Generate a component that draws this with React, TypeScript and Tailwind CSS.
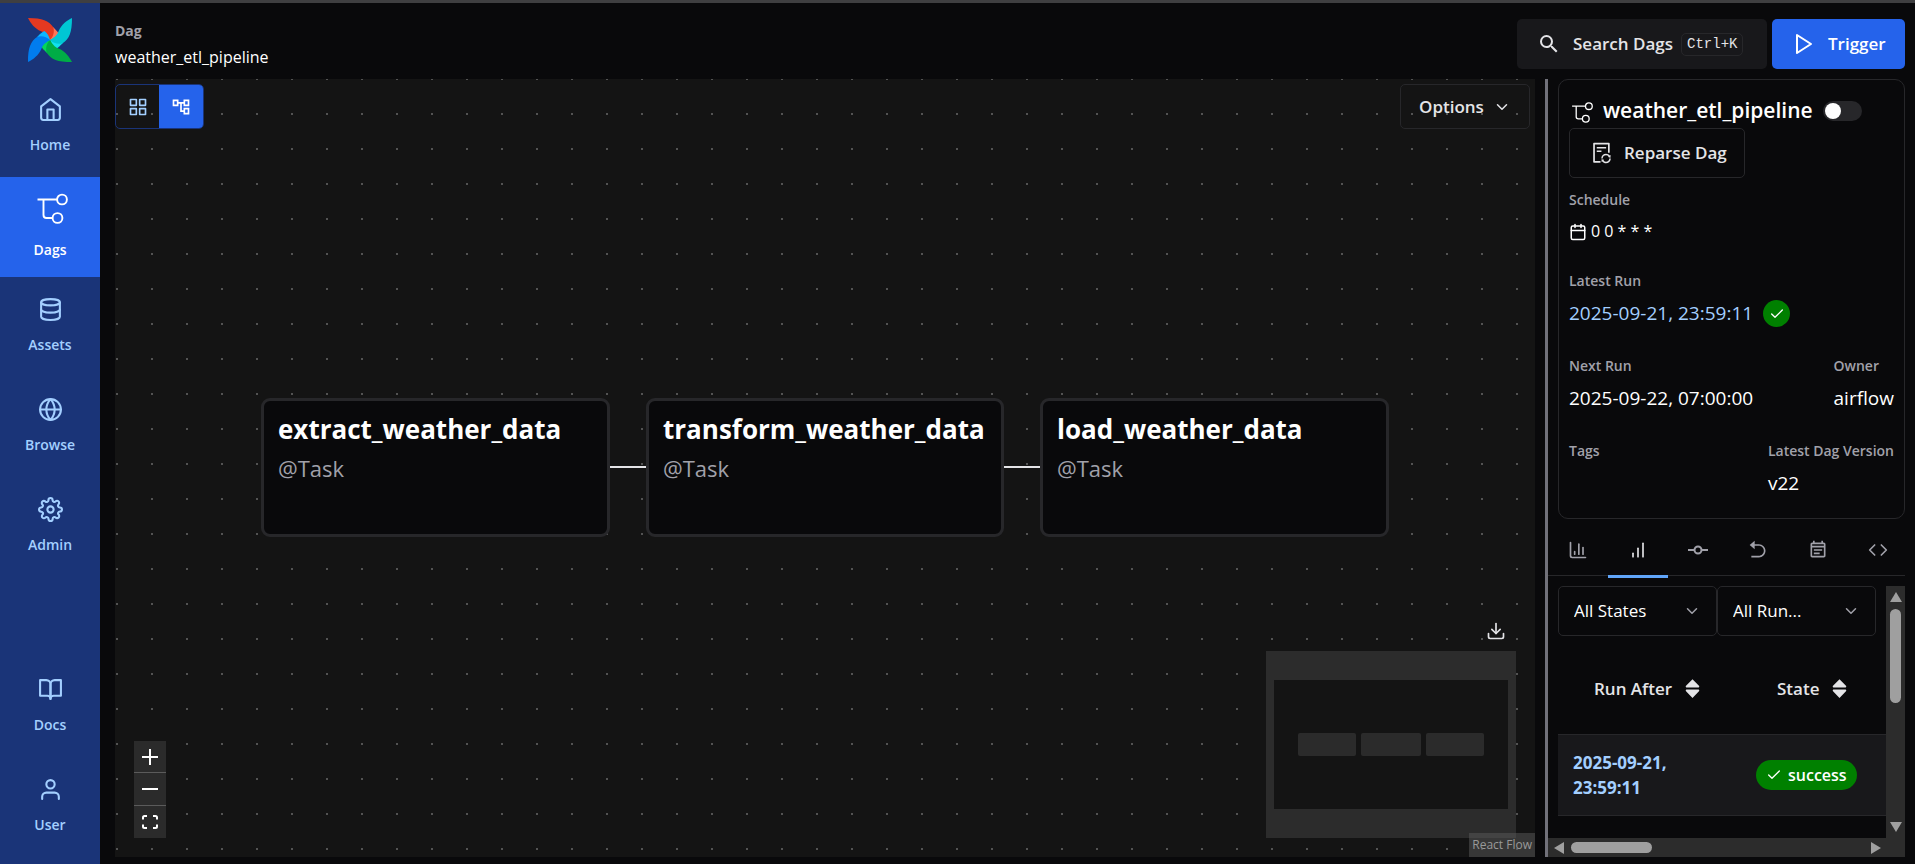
import type { ReactNode } from "react";
import {
  FiBarChart,
  FiBookOpen,
  FiCalendar,
  FiCheck,
  FiChevronDown,
  FiCode,
  FiDatabase,
  FiDownload,
  FiGlobe,
  FiGrid,
  FiHome,
  FiPlay,
  FiSettings,
  FiUser,
} from "react-icons/fi";
import { MdOutlineAccountTree, MdOutlineEventNote, MdSearch } from "react-icons/md";
import { AiOutlineFileSync } from "react-icons/ai";
import { RiArrowGoBackFill } from "react-icons/ri";
import { TiArrowUnsorted } from "react-icons/ti";
import { LuChartColumn } from "react-icons/lu";

function PinwheelLogo() {
  return (
    <svg viewBox="0 0 132 132" className="size-11" role="img" aria-label="Airflow">
      {[
        { turn: "rotate(0 66 66)", dark: "#e43921", light: "#ff7557" },
        { turn: "rotate(90 66 66)", dark: "#00c7d4", light: "#11e1ee" },
        { turn: "rotate(180 66 66)", dark: "#00ad46", light: "#04d659" },
        { turn: "rotate(270 66 66)", dark: "#017cee", light: "#0cb6ff" },
      ].map((blade) => (
        <g key={blade.turn} transform={blade.turn}>
          <path d="M76 28 C84 36 90 42 93 49 C86 58 78 63 66 66 C60 56 66 36 76 28Z" fill={blade.light} />
          <path d="M0 0 C44 0 62 8 76 28 C80 42 76 56 66 66 C56 48 48 43 39 40 C20 32 8 16 0 0Z" fill={blade.dark} />
        </g>
      ))}
    </svg>
  );
}

function DagIcon({ className }: { className: string }) {
  return (
    <svg viewBox="0 0 35 35" className={className} fill="none" stroke="currentColor" strokeWidth="1.9" aria-hidden="true">
      <circle cx="29" cy="7.5" r="4.9" />
      <circle cx="24.5" cy="26" r="4.9" />
      <path d="M4.5 7.5H24M10.5 7.5V23q0 3 3 3H19.5" />
    </svg>
  );
}

function TaskIcon({ className }: { className: string }) {
  return (
    <svg viewBox="0 0 20 20" className={className} fill="none" stroke="currentColor" strokeWidth="2" aria-hidden="true">
      <circle cx="10" cy="10" r="3.5" />
      <path d="M0 10H6.5M13.5 10H20" />
    </svg>
  );
}

function NavItem({ label, icon, active = false }: { label: string; icon: ReactNode; active?: boolean }) {
  return (
    <a
      href="#"
      aria-current={active ? "page" : undefined}
      className={
        active
          ? "flex h-[100px] flex-col items-center justify-center gap-3 bg-[#2563eb] pb-0.5 text-[14px] leading-[22px] font-semibold text-white"
          : "flex h-[100px] flex-col items-center justify-center gap-3 pb-0.5 text-[14px] leading-[22px] font-semibold text-[#a3cfff]"
      }
    >
      {icon}
      {label}
    </a>
  );
}

function Sidebar() {
  return (
    <nav aria-label="Main" className="flex w-[100px] shrink-0 flex-col justify-between bg-[#1a3478] pb-[7px]">
      <div>
        <a href="#" className="flex h-[74px] justify-center pt-[15px]">
          <PinwheelLogo />
        </a>
        <NavItem label="Home" icon={<FiHome className="size-[25px]" />} />
        <NavItem label="Dags" active icon={<DagIcon className="size-[35px]" />} />
        <NavItem label="Assets" icon={<FiDatabase className="size-[25px]" />} />
        <NavItem label="Browse" icon={<FiGlobe className="size-[25px]" />} />
        <NavItem label="Admin" icon={<FiSettings className="size-[25px]" />} />
      </div>
      <div>
        <NavItem label="Docs" icon={<FiBookOpen className="size-[25px]" />} />
        <NavItem label="User" icon={<FiUser className="size-[25px]" />} />
      </div>
    </nav>
  );
}

function Header() {
  return (
    <header className="flex h-[76px] shrink-0 items-start justify-between pt-4 pr-2.5 pl-[15px]">
      <div className="pt-0.5">
        <div className="text-[14px] leading-5 font-bold text-[#a1a1aa]">Dag</div>
        <a href="#" className="block pt-1 text-[16px] leading-6 text-white">
          weather_etl_pipeline
        </a>
      </div>
      <div className="flex gap-[5px]">
        <button className="flex h-[50px] w-[250px] items-center rounded-[5px] bg-[#18181b] pl-5 text-[17px] font-semibold text-[#e4e4e7]">
          <MdSearch className="mr-3 size-6" />
          Search Dags
          <kbd className="ml-2 rounded-[5px] border border-[#27272a] px-[5px] font-[Liberation_Mono,monospace] text-[14px] leading-[21px] font-normal">
            Ctrl+K
          </kbd>
        </button>
        <button className="flex h-[50px] w-[133px] items-center rounded-[5px] bg-[#2563eb] pl-5 text-[17px] font-semibold text-white">
          <FiPlay className="mr-3 size-6" />
          Trigger
        </button>
      </div>
    </header>
  );
}

function TaskNode({ name, width }: { name: string; width: string }) {
  return (
    <div className={`${width} h-[139px] rounded-[9px] border-[3px] border-[#27272a] bg-[#09090b] px-3.5 pt-[9px]`}>
      <div className="text-[26px] leading-[38px] font-bold text-white">{name}</div>
      <div className="pt-0.5 text-[22px] leading-9 text-[#a1a1aa]">@Task</div>
    </div>
  );
}

function GraphCanvas() {
  return (
    <main className="relative min-w-0 flex-1 overflow-hidden bg-[#141414]">
      <svg className="absolute inset-0 size-full" aria-hidden="true">
        <defs>
          <pattern id="dots" x="1" y="-1" width="35" height="35" patternUnits="userSpaceOnUse">
            <circle cx="1" cy="1" r="1" fill="#686868" />
          </pattern>
        </defs>
        <rect width="100%" height="100%" fill="url(#dots)" />
      </svg>

      <div className="relative flex h-full items-center justify-center pb-0.5">
        <TaskNode name="extract_weather_data" width="w-[349px]" />
        <div className="h-0.5 w-9 bg-[#e4e4e7]" />
        <TaskNode name="transform_weather_data" width="w-[358px]" />
        <div className="h-0.5 w-9 bg-[#e4e4e7]" />
        <TaskNode name="load_weather_data" width="w-[349px]" />
      </div>

      <div className="absolute top-[5px] left-0 flex h-[45px] overflow-hidden rounded-[5px] border border-[#1a3478]">
        <button aria-label="Grid view" className="flex w-[43px] items-center justify-center text-[#a3cfff]">
          <FiGrid className="size-5" />
        </button>
        <button aria-label="Graph view" aria-pressed="true" className="flex w-11 items-center justify-center bg-[#2563eb] text-white">
          <MdOutlineAccountTree className="size-5" />
        </button>
      </div>

      <button className="absolute top-[5px] right-[5px] flex h-[45px] w-[130px] items-center justify-between rounded-[5px] border border-[#27272a] px-[18px] text-[17px] font-semibold text-[#e4e4e7]">
        Options
        <FiChevronDown className="size-[18px]" />
      </button>

      <div className="absolute bottom-[19px] left-[19px] flex w-8 flex-col divide-y divide-[#5b5b5b] bg-[#2b2b2b] text-white">
        <button aria-label="Zoom in" className="flex h-8 items-center justify-center">
          <svg viewBox="0 0 16 16" className="size-4" stroke="currentColor" strokeWidth="2" aria-hidden="true">
            <path d="M8 0V16M0 8H16" />
          </svg>
        </button>
        <button aria-label="Zoom out" className="flex h-[33px] items-center justify-center">
          <svg viewBox="0 0 16 16" className="size-4" stroke="currentColor" strokeWidth="2" aria-hidden="true">
            <path d="M0 8H16" />
          </svg>
        </button>
        <button aria-label="Fit view" className="flex h-8 items-center justify-center">
          <svg viewBox="0 0 16 16" className="size-4" fill="none" stroke="currentColor" strokeWidth="2" aria-hidden="true">
            <path d="M1 5.5V3.5Q1 2 2.5 2H5M11 2H13.5Q15 2 15 3.5V5.5M15 10.5V12.5Q15 14 13.5 14H11M5 14H2.5Q1 14 1 12.5V10.5" />
          </svg>
        </button>
      </div>

      <button aria-label="Download graph" className="absolute right-[29px] bottom-[216px] text-[#e4e4e7]">
        <FiDownload className="size-5" />
      </button>

      <div className="absolute right-[19px] bottom-[19px] flex h-[187px] w-[250px] items-center justify-center bg-[#2c2c2c]">
        <div className="flex h-[129px] w-[234px] items-center justify-center gap-[5px] bg-[#141414]">
          <div className="h-[23px] w-[58px] rounded-[2px] bg-[#2b2b2b]" />
          <div className="h-[23px] w-[60px] rounded-[2px] bg-[#2b2b2b]" />
          <div className="h-[23px] w-[58px] rounded-[2px] bg-[#2b2b2b]" />
        </div>
      </div>
      <a href="#" className="absolute right-0 bottom-0 bg-[#5a5a5a]/50 px-[3px] text-[12px] leading-6 text-[#999999]">
        React Flow
      </a>
    </main>
  );
}

function Stat({ label, children }: { label: string; children?: ReactNode }) {
  return (
    <div>
      <dt className="text-[14px] leading-5 font-semibold text-[#a1a1aa]">{label}</dt>
      <dd className="flex h-[45px] items-center text-[19px] text-white">{children}</dd>
    </div>
  );
}

function DetailsCard() {
  return (
    <section className="ml-2.5 h-[440px] rounded-[10px] border border-[#27272a] px-2.5 pt-[13px]">
      <div className="flex items-center">
        <DagIcon className="mt-1 size-6" />
        <h1 className="ml-2.5 text-[21px] leading-[35px] font-semibold text-white">weather_etl_pipeline</h1>
        <label className="ml-2.5 flex h-5 w-[39px] items-center rounded-full bg-[#27272a] px-0.5">
          <input type="checkbox" role="switch" aria-label="Pause or unpause" className="size-4 appearance-none rounded-full bg-white" />
        </label>
      </div>
      <button className="flex h-[50px] w-44 items-center rounded-[5px] border border-[#27272a] pl-5 text-[17px] font-semibold text-[#e4e4e7]">
        <AiOutlineFileSync className="mr-2.5 size-6" />
        Reparse Dag
      </button>
      <dl className="flex flex-col gap-5 pt-3">
        <div className="-mb-1">
          <Stat label="Schedule">
            <span className="flex gap-1 pb-1 text-[16px]">
              <FiCalendar className="mt-1 size-[18px]" />
              0 0 * * *
            </span>
          </Stat>
        </div>
        <Stat label="Latest Run">
          <a href="#" className="text-[#a3cfff]">
            2025-09-21, 23:59:11
          </a>
          <span className="ml-2.5 flex size-[27px] items-center justify-center rounded-full bg-[#008000]">
            <FiCheck className="size-4" />
          </span>
        </Stat>
        <div className="flex justify-between">
          <Stat label="Next Run">2025-09-22, 07:00:00</Stat>
          <Stat label="Owner">airflow</Stat>
        </div>
        <div className="flex justify-between">
          <Stat label="Tags" />
          <Stat label="Latest Dag Version">v22</Stat>
        </div>
      </dl>
    </section>
  );
}

function Tabs() {
  const icons = [
    { name: "Overview", icon: <LuChartColumn className="size-5" /> },
    { name: "Runs", icon: <FiBarChart className="size-5" /> },
    { name: "Tasks", icon: <TaskIcon className="size-5" /> },
    { name: "Backfills", icon: <RiArrowGoBackFill className="size-5" /> },
    { name: "Events", icon: <MdOutlineEventNote className="size-5" /> },
    { name: "Code", icon: <FiCode className="size-5" /> },
  ];
  return (
    <div role="tablist" className="mt-1.5 flex h-[51px] shrink-0 items-start border-b border-[#27272a]">
      {icons.map((tab) => (
        <button
          key={tab.name}
          role="tab"
          aria-label={tab.name}
          aria-selected={tab.name === "Runs"}
          className={
            tab.name === "Runs"
              ? "flex h-[53px] w-15 shrink-0 items-center justify-center border-b-[3px] border-[#60a5fa] text-[#e4e4e7]"
              : "flex h-[53px] w-15 shrink-0 items-center justify-center border-b-[3px] border-transparent text-[#a1a1aa]"
          }
        >
          {tab.icon}
        </button>
      ))}
    </div>
  );
}

function FilterSelect({ label, value }: { label: string; value: string }) {
  return (
    <div className="grid flex-1 items-center">
      <select
        aria-label={label}
        className="col-start-1 row-start-1 h-[50px] w-full appearance-none rounded-[5px] border border-[#27272a] bg-transparent pl-[15px] text-[17px] text-white"
      >
        <option>{value}</option>
      </select>
      <FiChevronDown className="pointer-events-none col-start-1 row-start-1 mr-4 size-[18px] justify-self-end text-[#a1a1aa]" />
    </div>
  );
}

function SortHeader({ label, width }: { label: string; width: string }) {
  return (
    <th className={`${width} p-0 pt-2 text-left`}>
      <button className="flex items-center gap-2 pl-9 text-[17px] font-semibold text-[#e4e4e7]">
        {label}
        <TiArrowUnsorted className="size-[25px]" />
      </button>
    </th>
  );
}

function RunsPanel() {
  return (
    <div className="mt-2.5 flex min-h-0 flex-1 flex-col">
      <div className="flex min-h-0 flex-1">
        <div className="ml-2.5 min-w-0 flex-1 overflow-hidden">
          <div className="flex pr-2.5">
            <FilterSelect label="State" value="All States" />
            <FilterSelect label="Run type" value="All Run..." />
          </div>
          <table className="w-full table-fixed border-collapse">
            <thead>
              <tr className="h-[98px]">
                <SortHeader label="Run After" width="w-[183px]" />
                <SortHeader label="State" width="w-auto" />
              </tr>
            </thead>
            <tbody>
              <tr className="h-[81px] border-y border-[#27272a] bg-[#18181b]">
                <td className="pl-[15px] text-[17px] leading-[25px] font-bold">
                  <a href="#" className="block w-[120px] text-[#a3cfff]">
                    2025-09-21, 23:59:11
                  </a>
                </td>
                <td className="pl-[15px]">
                  <span className="inline-flex h-[30px] items-center gap-1.5 rounded-full bg-[#008000] px-2.5 text-[16px] font-semibold text-white">
                    <FiCheck className="size-4" />
                    success
                  </span>
                </td>
              </tr>
            </tbody>
          </table>
        </div>
        <div className="flex w-[19px] flex-col items-center bg-[#2c2c2c] py-1.5 text-[#9f9f9f]" aria-hidden="true">
          <svg viewBox="0 0 12 10" className="h-2.5 w-3" fill="currentColor">
            <path d="M6 0L12 10H0Z" />
          </svg>
          <div className="mt-[7px] h-[94px] w-[11px] rounded-full bg-[#9f9f9f]" />
          <svg viewBox="0 0 12 10" className="mt-auto h-2.5 w-3" fill="currentColor">
            <path d="M6 10L12 0H0Z" />
          </svg>
        </div>
      </div>
      <div className="flex h-[19px] items-center bg-[#2c2c2c] pl-1.5 text-[#9f9f9f]" aria-hidden="true">
        <svg viewBox="0 0 10 12" className="h-3 w-2.5" fill="currentColor">
          <path d="M0 6L10 0V12Z" />
        </svg>
        <div className="ml-[7px] h-[11px] w-[81px] rounded-full bg-[#9f9f9f]" />
        <svg viewBox="0 0 10 12" className="mr-6 ml-auto h-3 w-2.5" fill="currentColor">
          <path d="M10 6L0 0V12Z" />
        </svg>
      </div>
    </div>
  );
}

export default function App() {
  return (
    <div className="flex h-screen overflow-hidden border-t-[3px] border-[#3f3f41] bg-[#09090b] font-[Open_Sans,sans-serif] text-white">
      <Sidebar />
      <div className="flex min-w-0 flex-1 flex-col">
        <Header />
        <div className="flex min-h-0 flex-1 pr-2.5 pb-[7px] pl-[15px]">
          <GraphCanvas />
          <div className="ml-2.5 w-[3px] shrink-0 bg-[#71717a]" />
          <aside className="flex w-[357px] shrink-0 flex-col">
            <DetailsCard />
            <Tabs />
            <RunsPanel />
          </aside>
        </div>
      </div>
    </div>
  );
}
